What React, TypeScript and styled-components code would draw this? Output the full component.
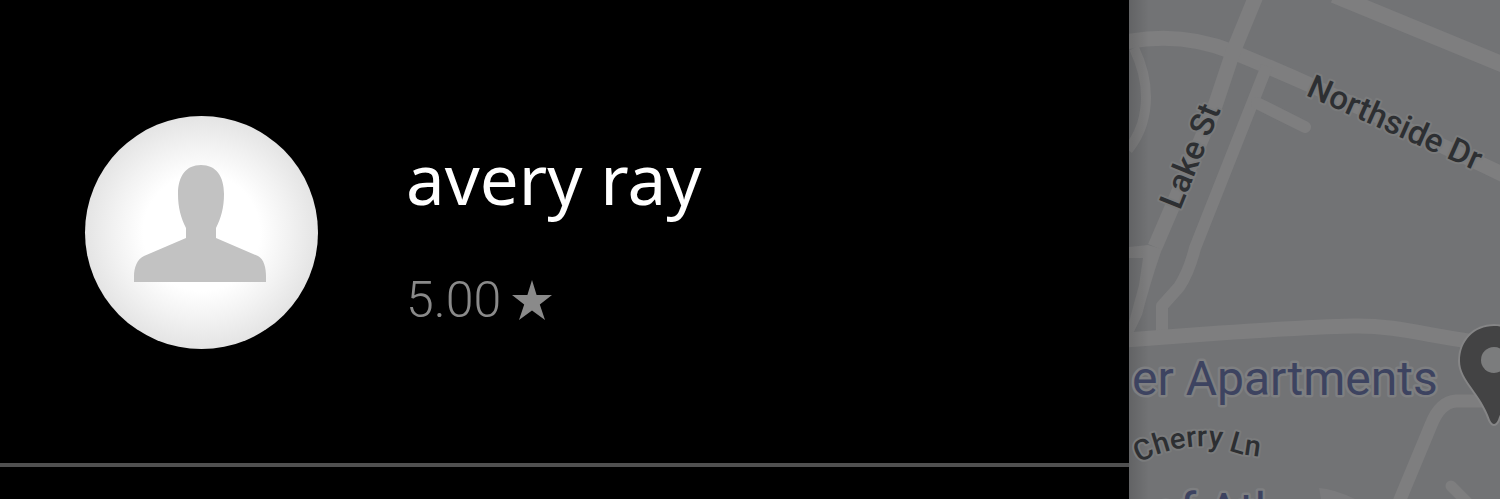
import React from "react";
import styled, { createGlobalStyle } from "styled-components";

const GlobalStyle = createGlobalStyle`
  *, *::before, *::after { box-sizing: border-box; }
  body { margin: 0; background: #000; }
`;

const Screen = styled.div`
  display: grid;
  grid-template-columns: 1129fr 371fr;
  height: 100vh;
  overflow: hidden;
  background: #000;
`;

const Drawer = styled.aside`
  min-width: 0;
  background: #000;
  color: #fff;
`;

const Profile = styled.header`
  display: flex;
  align-items: center;
  gap: 88px;
  padding: 116px 84px 114px;
  border-bottom: 4px solid #505050;
`;

const Avatar = styled.svg`
  flex: none;
  width: 234px;
  height: 233px;
`;

const Identity = styled.div`
  display: flex;
  flex-direction: column;
  gap: 54px;
  min-width: 0;
`;

const Name = styled.h1`
  margin: 0;
  font: 400 69px/80px "Noto Sans", "Open Sans", sans-serif;
  white-space: nowrap;
`;

const Rating = styled.p`
  display: flex;
  align-items: center;
  gap: 10px;
  margin: 0;
  color: #8a8a8a;
  font: 300 50px/56px Roboto, "Open Sans", sans-serif;
`;

const Star = styled.svg`
  width: 42px;
  height: 42px;
  fill: #8a8a8a;
`;

const MapPanel = styled.main`
  min-width: 0;
  min-height: 0;
  background: #727375;
`;

const MapDrawing = styled.svg`
  display: block;
  width: 100%;
  height: 100%;
`;

const Road = styled.path<{ $width: number }>`
  fill: none;
  stroke: #7e7e7f;
  stroke-width: ${(p) => p.$width}px;
  stroke-linejoin: round;
`;

const StreetLabel = styled.text<{ $size: number }>`
  fill: #2d2f32;
  stroke: #7a7b7c;
  stroke-width: 4px;
  stroke-linejoin: round;
  paint-order: stroke;
  font: 500 ${(p) => p.$size}px Roboto, sans-serif;
`;

const PlaceLabel = styled.text`
  fill: #3d4360;
  stroke: #7e7f81;
  stroke-width: 5px;
  stroke-linejoin: round;
  paint-order: stroke;
  font: 400 48px Roboto, sans-serif;
`;

export default function App() {
  return (
    <Screen>
      <GlobalStyle />
      <Drawer>
        <Profile>
          <Avatar viewBox="0 0 234 233" role="img" aria-label="Profile photo">
            <defs>
              <radialGradient id="glow">
                <stop offset="0.5" stopColor="#fff" />
                <stop offset="0.75" stopColor="#f2f2f2" />
                <stop offset="1" stopColor="#e4e4e4" />
              </radialGradient>
            </defs>
            <circle cx="117.500" cy="116.500" r="116.500" fill="url(#glow)" />
            <path
              fill="#c2c2c2"
              d="M117 49 C132 49 140 60 140 78 C140 92 137 102 132 112 V122 L174 140 C180 143 182 152 182 160 V166 H50 V160 C50 152 53 143 60 140 L102 122 V112 C97 102 94 92 94 78 C94 60 102 49 117 49Z"
            />
          </Avatar>
          <Identity>
            <Name>avery ray</Name>
            <Rating>
              5.00
              <Star viewBox="0 0 42 42" role="img" aria-label="stars">
                <path d="M21 1 L25.600 16 H41 L28.800 25.500 L34 41 L21 31.500 L8 41 L13.200 25.500 L1 16 H16.400Z" />
              </Star>
            </Rating>
          </Identity>
        </Profile>
      </Drawer>
      <MapPanel>
        <MapDrawing viewBox="0 0 371 499" preserveAspectRatio="xMinYMin slice" role="img" aria-label="Street map">
          <defs>
            <linearGradient id="edge">
              <stop offset="0" stopColor="#000" stopOpacity="0.14" />
              <stop offset="1" stopColor="#000" stopOpacity="0" />
            </linearGradient>
            <path id="cherry" d="M10 463 C42 445 85 442 102 451 C112 455 125 456 165 461" />
          </defs>
          <Road $width={16} d="M205 -5 L375 65" />
          <Road $width={15} d="M-3 42 Q52 31 104 52 C150 71 180 83 375 175" />
          <Road $width={15} d="M127 -4 L104 52 L84 112 L26 247" />
          <path fill="#7e7e7f" d="M19 245 L33 249 Q22 280 13 315 L2 338 H0 V322 L10 285 L14 258 H0 V247Z" />
          <Road $width={12} d="M138 66 L66 248 Q60 272 50 287 L33 306 V334" />
          <Road $width={12} strokeLinecap="round" d="M128 103 L176 127" />
          <Road $width={10} d="M5 48 Q24 88 13 124 Q9 137 -1 150" />
          <Road $width={15} d="M-3 340 L91 333 Q180 327 224 326 C275 325 310 340 375 345" />
          <Road $width={13} d="M270 502 L302 425 Q311 402 327 401 H362" />
          <path fill="#7b7b7d" d="M190 488 Q205 489 226 499 H192Z" />
          <Road $width={11} strokeLinecap="round" d="M322 486 L340 504" />
          <rect width="20" height="499" fill="url(#edge)" />

          <StreetLabel $size={33} transform="translate(176 95) rotate(24)">Northside Dr</StreetLabel>
          <StreetLabel $size={33} transform="translate(51 211) rotate(-68)">Lake St</StreetLabel>
          <PlaceLabel x="3" y="395">er Apartments</PlaceLabel>
          <StreetLabel $size={29}>
            <textPath href="#cherry">Cherry Ln</textPath>
          </StreetLabel>
          <PlaceLabel x="23" y="527">of Atl</PlaceLabel>

          <path
            fill="#434344"
            stroke="#858586"
            strokeWidth="4"
            paintOrder="stroke"
            d="M365 326 C345 326 331 341 331 361 C331 380 352 393 361 420 Q365 428 369 420 C378 393 399 380 399 361 C399 341 385 326 365 326Z"
          />
          <circle cx="365" cy="360" r="13" fill="#7b7c7d" />
        </MapDrawing>
      </MapPanel>
    </Screen>
  );
}
